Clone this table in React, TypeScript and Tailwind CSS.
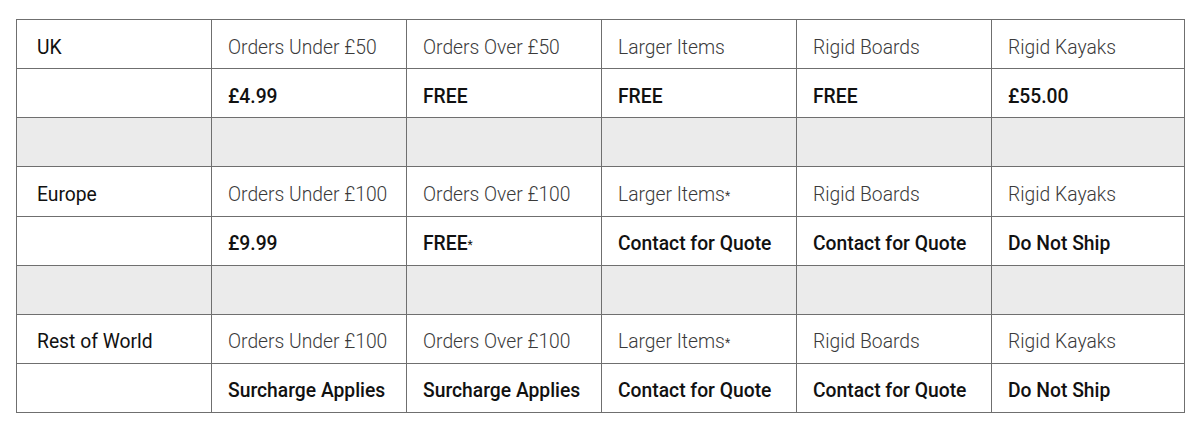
const regions = [
  {
    name: 'UK',
    heads: ['Orders Under £50', 'Orders Over £50', 'Larger Items', 'Rigid Boards', 'Rigid Kayaks'],
    values: ['£4.99', 'FREE', 'FREE', 'FREE', '£55.00'],
  },
  {
    name: 'Europe',
    heads: ['Orders Under £100', 'Orders Over £100', 'Larger Items*', 'Rigid Boards', 'Rigid Kayaks'],
    values: ['£9.99', 'FREE*', 'Contact for Quote', 'Contact for Quote', 'Do Not Ship'],
  },
  {
    name: 'Rest of World',
    heads: ['Orders Under £100', 'Orders Over £100', 'Larger Items*', 'Rigid Boards', 'Rigid Kayaks'],
    values: ['Surcharge Applies', 'Surcharge Applies', 'Contact for Quote', 'Contact for Quote', 'Do Not Ship'],
  },
];

function Star({ text }: { text: string }) {
  // asterisks are drawn small and raised in the reference
  if (!text.endsWith('*')) return <>{text}</>;
  return (
    <>
      {text.slice(0, -1)}
      <span className="text-[12px] align-[1px] font-normal">*</span>
    </>
  );
}

const cell = 'border border-[#6f6f6f] h-[49.125px] px-4 pt-[8px] pb-0 text-left align-middle';

export default function App() {
  return (
    <div className="bg-white w-[1200px] h-[430px] pt-[19px] pl-4 font-['Roboto',sans-serif] text-[19.3px]">
      <table className="border-collapse table-fixed w-[1169px]">
        <colgroup>
          <col className="w-[195px]" />
          <col className="w-[195px]" />
          <col className="w-[195px]" />
          <col className="w-[195px]" />
          <col className="w-[195px]" />
          <col />
        </colgroup>
        <tbody>
          {regions.map((r, idx) => (
            <>
              {idx > 0 && (
                <tr key={r.name + '-gap'} className="bg-[#ebebeb]">
                  {[0, 1, 2, 3, 4, 5].map((i) => (
                    <td key={i} className={cell}></td>
                  ))}
                </tr>
              )}
              <tr key={r.name}>
                <td className={cell + ' pl-5 text-[#111] font-normal'}>{r.name}</td>
                {r.heads.map((h, i) => (
                  <td key={i} className={cell + ' font-light text-[#3a3a3a]'}>
                    <Star text={h} />
                  </td>
                ))}
              </tr>
              <tr key={r.name + '-v'}>
                <td className={cell}></td>
                {r.values.map((v, i) => (
                  <td key={i} className={cell + ' font-medium text-[#111]'}>
                    <Star text={v} />
                  </td>
                ))}
              </tr>
            </>
          ))}
        </tbody>
      </table>
    </div>
  );
}
